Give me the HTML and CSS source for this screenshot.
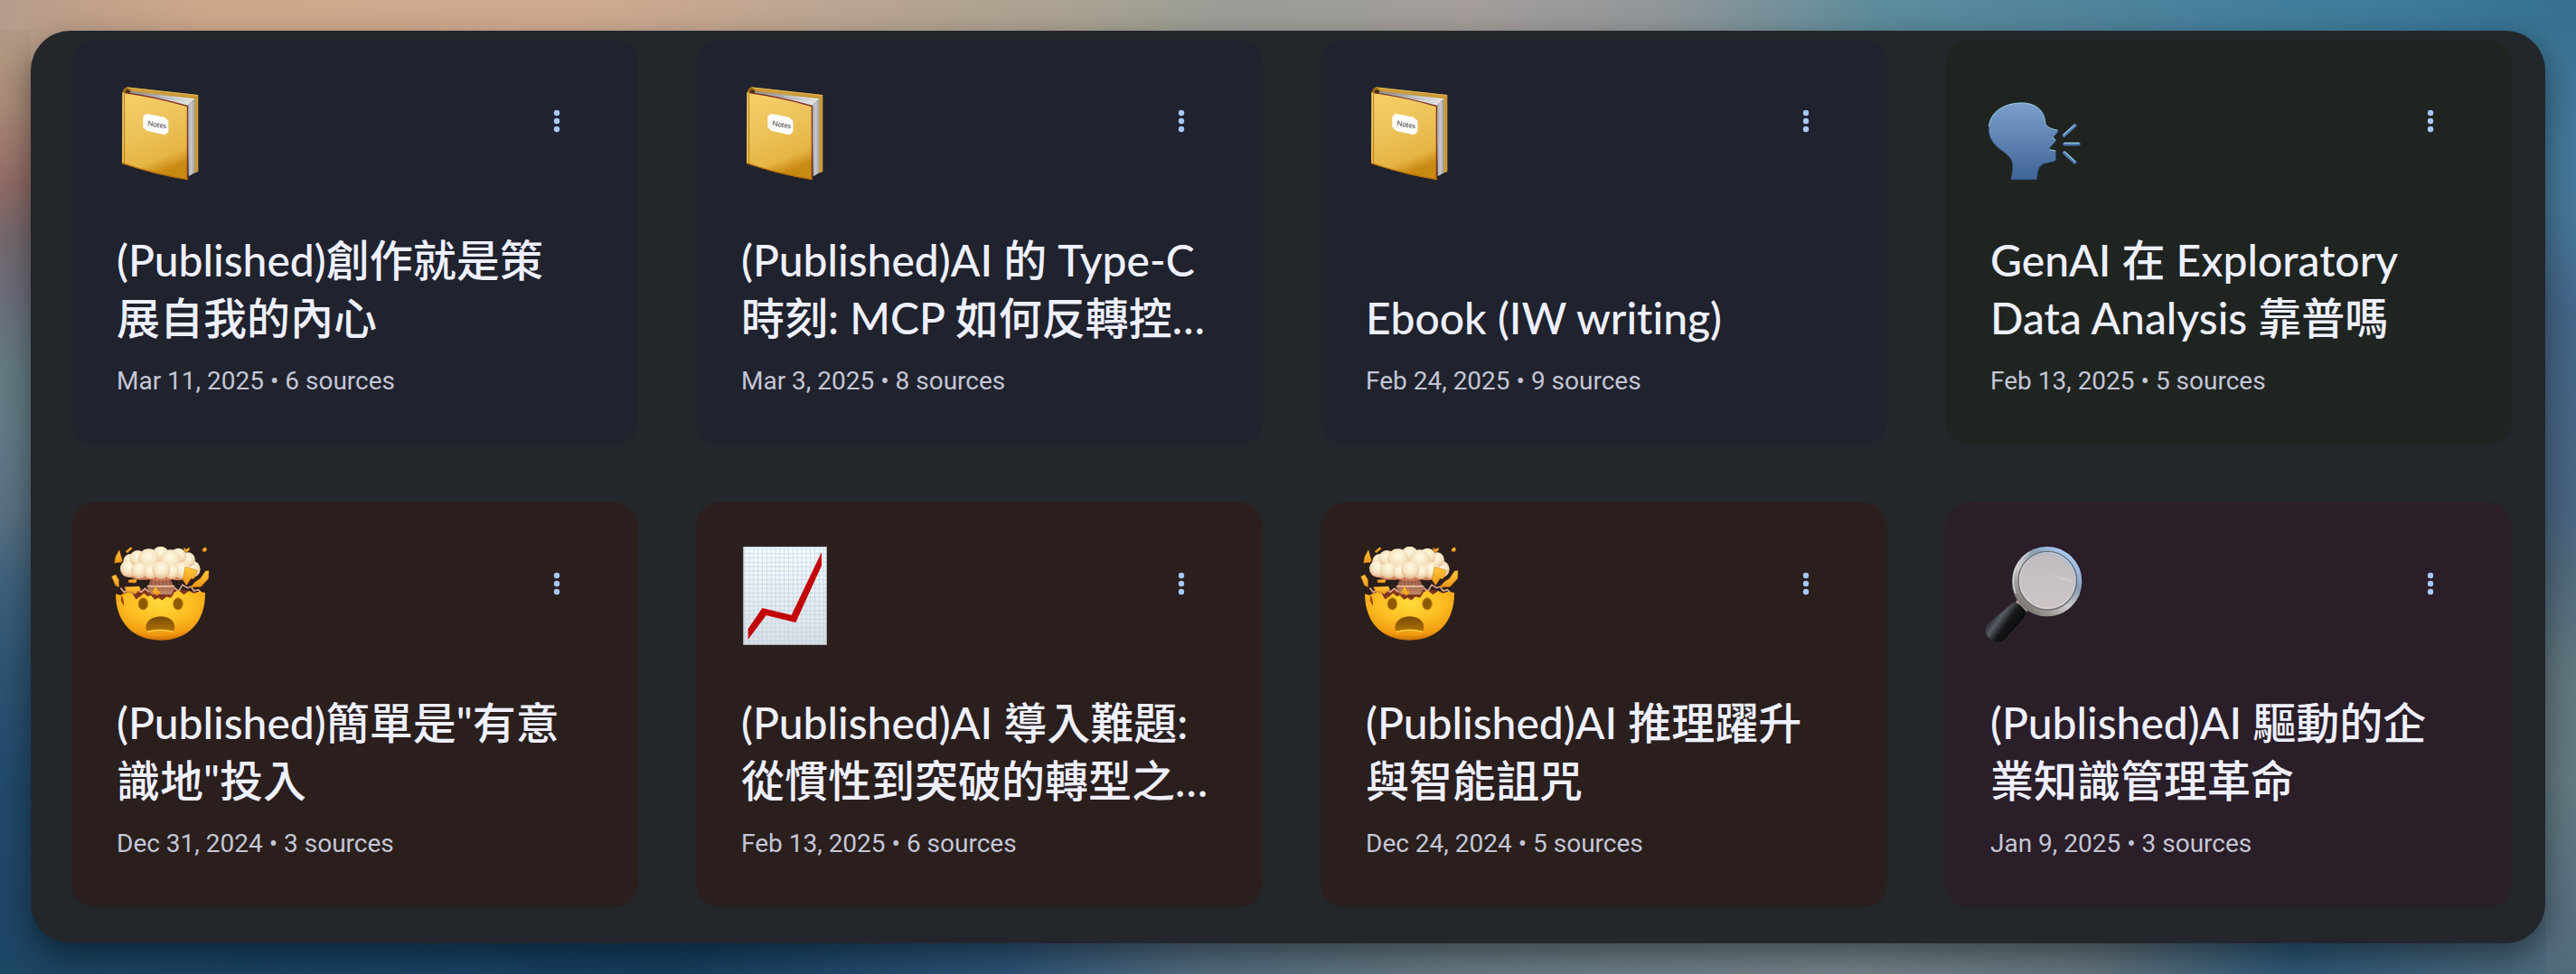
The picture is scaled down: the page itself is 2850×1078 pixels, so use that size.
FILE: index.html
```html
<!DOCTYPE html>
<html lang="zh-Hant">
<head>
<meta charset="utf-8">
<meta name="viewport" content="width=device-width, initial-scale=1">
<title>Notebooks</title>
<link rel="stylesheet" href="styles.css">
</head>
<body>
<svg class="sprite" aria-hidden="true">
  <defs>
    <linearGradient id="cover" x1="0" y1="0" x2="0.3" y2="1"><stop offset="0" stop-color="#f8d068"/><stop offset=".45" stop-color="#edc45c"/><stop offset=".85" stop-color="#e6b544"/><stop offset="1" stop-color="#c98a12"/></linearGradient>
    <linearGradient id="pages" x1="0" y1="0" x2="1" y2="0"><stop offset="0" stop-color="#8f8f93"/><stop offset=".5" stop-color="#c6c6ca"/><stop offset="1" stop-color="#9a9a9d"/></linearGradient>
    <linearGradient id="pages-top" x1="0" y1="0" x2="1" y2="0"><stop offset="0" stop-color="#8a8a8c"/><stop offset=".6" stop-color="#b9b9bb"/><stop offset="1" stop-color="#e4e4e4"/></linearGradient>
    <linearGradient id="head" x1="0" y1="0" x2="0" y2="1"><stop offset="0" stop-color="#7ba0cb"/><stop offset="1" stop-color="#3f6597"/></linearGradient>
    <radialGradient id="face" cx=".5" cy=".25" r=".75"><stop offset="0" stop-color="#ffdb3b"/><stop offset=".5" stop-color="#fdbd22"/><stop offset=".85" stop-color="#f09a10"/><stop offset="1" stop-color="#c96d05"/></radialGradient>
    <radialGradient id="puff" cx=".5" cy=".35" r=".65"><stop offset="0" stop-color="#fffbe6"/><stop offset=".6" stop-color="#f6e3bf"/><stop offset="1" stop-color="#e3b48b"/></radialGradient>
    <linearGradient id="shard" x1="0" y1="0" x2="0" y2="1"><stop offset="0" stop-color="#ffcb3d"/><stop offset="1" stop-color="#ef9416"/></linearGradient>
    <linearGradient id="stem" x1="0" y1="0" x2="0" y2="1"><stop offset="0" stop-color="#8a3f2c"/><stop offset="1" stop-color="#c08a6c"/></linearGradient>
    <linearGradient id="mouth" x1="0" y1="0" x2="0" y2="1"><stop offset="0" stop-color="#7a4b02"/><stop offset="1" stop-color="#ab7108"/></linearGradient>
    <linearGradient id="paper" x1="0" y1="0" x2="0" y2="1"><stop offset="0" stop-color="#fbfcfd"/><stop offset="1" stop-color="#dfe1e1"/></linearGradient>
    <linearGradient id="rim" x1=".9" y1=".1" x2=".2" y2=".95"><stop offset="0" stop-color="#a9ccf8"/><stop offset=".3" stop-color="#8b9cb4"/><stop offset=".6" stop-color="#cfcdcc"/><stop offset="1" stop-color="#7e7873"/></linearGradient>
    <linearGradient id="lens" x1="0" y1="0" x2="0" y2="1"><stop offset="0" stop-color="#bfbabf"/><stop offset="1" stop-color="#cfc7c5"/></linearGradient>
    <linearGradient id="grip" x1=".15" y1=".3" x2=".85" y2=".8"><stop offset="0" stop-color="#1c1e21"/><stop offset=".25" stop-color="#565c63"/><stop offset=".5" stop-color="#141618"/><stop offset=".85" stop-color="#08090a"/><stop offset="1" stop-color="#35353a"/></linearGradient>
    <pattern id="grid" x="56" y="52" width="14.5" height="14.5" patternUnits="userSpaceOnUse"><path d="M0 1.500H14.500M1.500 0V14.500" stroke="#a5cdee" stroke-width="2.200" opacity=".75"/></pattern>
  </defs>

  <symbol id="icon-notebook" viewBox="39 39 330 330">
    <path d="M90 49 328 75V330L312 336V92L96 64Z" fill="#c99b3a"/>
    <path d="M92 51 327 77" stroke="#e0b552" stroke-width="3"/>
    <path d="M97 62 316 88 292 112 94 70Z" fill="url(#pages-top)"/>
    <path d="M292 112 316 88V334L296 346Z" fill="url(#pages)"/>
    <path d="M298 108V342M304 102V340M310 96V336" stroke="#efeff2" stroke-width="1.500" opacity=".4"/>
    <path d="M200 80 314 90M230 92 306 98M180 84 300 106" stroke="#fff" stroke-width="2" opacity=".6"/>
    <path d="M92 49Q78 54 77 68L97 73 104 60Z" fill="#a06c13"/>
    <path d="M90 58 104 62 98 70 86 66Z" fill="#2f2a26"/>
    <path d="M76 67Q180 82 294 114V357Q180 338 75 302Z" fill="url(#cover)"/>
    <path d="M84 68Q185 82 292 112V352" fill="none" stroke="#83281b" stroke-width="3.500"/>
    <path d="M83 70V302" stroke="#b57b1a" stroke-width="3"/>
    <path d="M76 302Q180 338 294 356" fill="none" stroke="#b26f0b" stroke-width="4"/>
    <path d="M156 137 216 149 229 162V198L217 208 157 194 145 182V147Z" fill="#fff"/>
    <text class="book-label" x="159" y="177" transform="rotate(9 159 177)">Notes</text>
  </symbol>

  <symbol id="icon-speaking" viewBox="48 9 330 330">
    <path d="M134 326Q143 292 139 270C134 244 101 231 84 213C67 195 61 178 61 157C61 105 108 71 170 71C218 71 245 97 248 136C250 153 270 158 290 163C292 174 275 180 276 188L283 196C284 203 264 214 262 226L283 231C284 240 281 249 285 259C279 272 248 266 234 280C222 291 223 308 220 326Z" fill="url(#head)" stroke="#2c4e7c" stroke-width="2"/>
    <path d="M62 150C65 104 110 72 170 72C218 72 245 97 248 136C250 153 270 158 290 163M262 227 283 231M274 186 283 196" fill="none" stroke="#9bd0e0" stroke-width="3"/>
    <g stroke-linecap="round" fill="none"><path d="M311 180 347 147M312 208H360M311 237 346 269" stroke="#4e79b0" stroke-width="11"/><path d="M309 177 345 145M312 205H360M313 234 348 266" stroke="#8fc3d8" stroke-width="4"/></g>
  </symbol>

  <symbol id="icon-exploding" viewBox="39 45 330 330">
    <path d="M72 200 84 196 110 198 128 188 164 186H245L280 188 338 200 330 216H80Z" fill="#7b3323"/>
    <path d="M70 182 82 196 96 188 108 198 122 182 138 196 152 184 164 196M236 194 250 182 262 194 276 172 292 182 304 178 314 192 328 188 338 198" fill="none" stroke="#e0aa8c" stroke-width="5"/>
    <path d="M168 140H238Q234 160 250 180L240 204H170L158 180Q172 160 168 140Z" fill="url(#stem)"/>
    <path d="M180 154V176M192 156V178M204 156V178M216 156V178M228 154V176" stroke="#e6b49a" stroke-width="2" opacity=".6"/>
    <path d="M156 177Q165 170 178 175 191 171 204 175 218 171 229 175 244 170 252 177Q240 181 204 180 168 181 156 177Z" fill="#e2bd9b"/>
    <path d="M54 202 70 206 84 200 96 194 110 202 122 220 136 207 148 196 160 207 172 204 184 218 196 212 208 220 222 208 236 212 246 198 262 190 280 204 298 192 312 200 330 194 351 198C352 292 298 356 203 356C108 356 54 292 54 202Z" fill="url(#face)"/>
    <path d="M120 218 136 207 148 196 160 207 172 204 184 218 196 212 208 220 222 208 236 212 246 198" fill="none" stroke="#8d3b16" stroke-width="5"/>
    <path d="M72 206Q83 216 81 242L71 224Z" fill="#a34c0b"/>
    <path d="M84 130H320Q312 150 284 152 266 160 240 154 204 164 168 154 140 158 116 152 94 148 84 130Z" fill="#cf7f58"/>
    <g fill="url(#puff)">
      <circle cx="104" cy="94" r="25"/><circle cx="98" cy="118" r="29"/><circle cx="306" cy="120" r="29"/><circle cx="293" cy="89" r="25"/><circle cx="127" cy="84" r="27"/><circle cx="262" cy="77" r="27"/><circle cx="203" cy="71" r="27"/><circle cx="164" cy="87" r="35"/><circle cx="236" cy="90" r="35"/><circle cx="132" cy="124" r="27"/><circle cx="275" cy="124" r="28"/><circle cx="170" cy="128" r="24"/><circle cx="240" cy="128" r="25"/><circle cx="205" cy="122" r="30"/>
    </g>
    <g fill="url(#shard)" stroke="#cf7410" stroke-width="1.500">
      <path d="M66 56 72 78 76 90 72 97 50 99 54 78Z"/><path d="M87 61 104 47 109 51 92 66Z"/><path d="M281 48 287 54 299 49 298 57 290 64 282 60Z"/><path d="M343 52 352 47 357 55 351 62 342 60Z"/><path d="M41 144 54 138 64 155 65 179 53 174Z"/><path d="M285 112 325 124 313 152 304 151 289 173 277 155Z"/><path d="M352 126 363 125 362 151 337 178 302 180 318 162 335 151Z"/><path d="M83 179 110 178 132 177 137 187 118 203 108 196 91 195Z"/><path d="M187 176 195 192 206 194 192 208 174 196Z"/><path d="M96 156 124 154 121 165 97 164Z"/>
    </g>
    <g fill="#8d5a04" stroke="#d08c0b" stroke-width="3"><ellipse cx="145" cy="235" rx="16" ry="20"/><ellipse cx="261" cy="235" rx="16" ry="20"/></g>
    <path d="M155 320C150 292 176 277 203 277S255 292 249 320C246 330 228 321 202 321S158 330 155 320Z" fill="url(#mouth)"/>
    <path d="M160 328Q203 315 244 328" fill="none" stroke="#ffd545" stroke-width="4"/>
  </symbol>

  <symbol id="icon-chart" viewBox="27 45 330 330">
    <path d="M52 45H329V371H52Z" fill="url(#paper)"/>
    <path d="M52 45H329V371H52Z" fill="url(#grid)"/>
    <path d="M53 46H328V370H53Z" fill="none" stroke="#a5a9ab" stroke-width="2"/>
    <path d="M68 318 115 249 212 272 312 63V108L226 297 128 273 68 353Z" fill="#c20508"/>
  </symbol>

  <symbol id="icon-magnifier" viewBox="48 45 330 330">
    <path d="M158 218 192 246 184 270 146 236Z" fill="#b3a19c"/>
    <path d="M176 226 200 254" stroke="#eee2df" stroke-width="8"/>
    <path d="M138 234Q146 226 164 238L180 254Q190 262 184 276L112 358Q100 370 80 362 56 350 50 326 50 312 58 302Z" fill="url(#grip)" stroke="#45464c" stroke-width="1.500"/>
    <circle cx="254" cy="161" r="104" fill="url(#lens)" stroke="url(#rim)" stroke-width="24"/>
    <circle cx="256" cy="158" r="97" fill="none" stroke="#6d6f74" stroke-width="4"/>
    <circle cx="256" cy="157" r="92" fill="none" stroke="#d8d7da" stroke-width="3"/>
    <path d="M150 200A114 114 0 0 1 196 63" fill="none" stroke="#d5d8da" stroke-width="4"/>
    <path d="M272 138 336 154V164L302 158Z" fill="#d7cfcf" opacity=".7"/>
  </symbol>

  <symbol id="icon-more" viewBox="0 0 32 32">
    <circle cx="16" cy="7" r="3.200"/><circle cx="16" cy="16" r="3.200"/><circle cx="16" cy="25" r="3.200"/>
  </symbol>
</svg>

<main class="panel">
  <article class="card card-blue">
    <header class="card-head"><svg class="emoji" aria-hidden="true"><use href="#icon-notebook"/></svg><button class="more" type="button" aria-label="More options"><svg class="more-icon"><use href="#icon-more"/></svg></button></header>
    <h2 class="title">(Published)創作就是策<br>展自我的內心</h2>
    <p class="meta">Mar 11, 2025 • 6 sources</p>
  </article>
  <article class="card card-blue">
    <header class="card-head"><svg class="emoji" aria-hidden="true"><use href="#icon-notebook"/></svg><button class="more" type="button" aria-label="More options"><svg class="more-icon"><use href="#icon-more"/></svg></button></header>
    <h2 class="title">(Published)AI 的 Type-C 時刻: MCP 如何反轉控…</h2>
    <p class="meta">Mar 3, 2025 • 8 sources</p>
  </article>
  <article class="card card-blue">
    <header class="card-head"><svg class="emoji" aria-hidden="true"><use href="#icon-notebook"/></svg><button class="more" type="button" aria-label="More options"><svg class="more-icon"><use href="#icon-more"/></svg></button></header>
    <h2 class="title">Ebook (IW writing)</h2>
    <p class="meta">Feb 24, 2025 • 9 sources</p>
  </article>
  <article class="card card-green">
    <header class="card-head"><svg class="emoji" aria-hidden="true"><use href="#icon-speaking"/></svg><button class="more" type="button" aria-label="More options"><svg class="more-icon"><use href="#icon-more"/></svg></button></header>
    <h2 class="title">GenAI 在 Exploratory Data Analysis 靠普嗎</h2>
    <p class="meta">Feb 13, 2025 • 5 sources</p>
  </article>
  <article class="card card-brown">
    <header class="card-head"><svg class="emoji" aria-hidden="true"><use href="#icon-exploding"/></svg><button class="more" type="button" aria-label="More options"><svg class="more-icon"><use href="#icon-more"/></svg></button></header>
    <h2 class="title">(Published)簡單是"有意識地"投入</h2>
    <p class="meta">Dec 31, 2024 • 3 sources</p>
  </article>
  <article class="card card-brown">
    <header class="card-head"><svg class="emoji" aria-hidden="true"><use href="#icon-chart"/></svg><button class="more" type="button" aria-label="More options"><svg class="more-icon"><use href="#icon-more"/></svg></button></header>
    <h2 class="title">(Published)AI 導入難題: 從慣性到突破的轉型之…</h2>
    <p class="meta">Feb 13, 2025 • 6 sources</p>
  </article>
  <article class="card card-brown">
    <header class="card-head"><svg class="emoji" aria-hidden="true"><use href="#icon-exploding"/></svg><button class="more" type="button" aria-label="More options"><svg class="more-icon"><use href="#icon-more"/></svg></button></header>
    <h2 class="title">(Published)AI 推理躍升與智能詛咒</h2>
    <p class="meta">Dec 24, 2024 • 5 sources</p>
  </article>
  <article class="card card-purple">
    <header class="card-head"><svg class="emoji" aria-hidden="true"><use href="#icon-magnifier"/></svg><button class="more" type="button" aria-label="More options"><svg class="more-icon"><use href="#icon-more"/></svg></button></header>
    <h2 class="title">(Published)AI 驅動的企業知識管理革命</h2>
    <p class="meta">Jan 9, 2025 • 3 sources</p>
  </article>
</main>
</body>
</html>
```

FILE: styles.css
```css
* { box-sizing: border-box; }

body {
  --sky: linear-gradient(90deg, #b49c8b 0%, #b89d8a 1%, #cfa88b 8%, #d0aa90 22%, #bca592 32%, #a9a292 42%, #9a9d98 48%, #a59e9b 57%, #8f969a 65%, #5d8c9c 73%, #457f9c 87%, #3b7898 95%, #38708f 100%);
  margin: 0;
  min-height: 100vh;
  padding: 34px;
  display: flex;
  font-family: Lato, "Noto Sans CJK TC", sans-serif;
  /* soft wallpaper: one gradient per edge of the window */
  background:
    var(--sky) top / 100% 34px no-repeat,
    linear-gradient(#b49c8b 0%, #b0957f 6%, #a98a77 11%, #906c66 19%, #75686d 24%, #6b6f7c 31%, #647b83 38%, #627b86 44%, #5b7283 52%, #3f617b 60%, #2c5473 69%, #214a6c 80%, #1d4564 100%) left / 34px 100% no-repeat,
    linear-gradient(#38708f 0%, #43799a 14%, #467899 22%, #456689 32%, #4a6583 52%, #4f6a7d 58%, #62777f 69%, #647a82 80%, #5a7180 92%, #526c7e 100%) right / 34px 100% no-repeat,
    linear-gradient(90deg, #1d4564 0%, #194466 15%, #163f60 26%, #2d5478 39%, #516c80 46%, #6a7d85 57%, #74858b 72%, #66777f 81%, #2e5878 89%, #526c7e 100%) bottom / 100% 50% no-repeat,
    var(--sky);
}

.sprite { position: absolute; width: 0; height: 0; }

.panel {
  flex: 1;
  min-width: 0;
  display: grid;
  grid-template-columns: repeat(4, minmax(0, 1fr));
  grid-auto-rows: 448px;
  gap: 64px;
  padding: 10px 37px 40px 45px;
  border-radius: 44px;
  background: #23272b;
  box-shadow: 0 14px 36px rgba(0, 0, 0, 0.45);
}

.card {
  display: flex;
  flex-direction: column;
  padding: 49px 50px 50px;
  border-radius: 26px;
}

.card-blue { background: #20222d; }
.card-green { background: #1f2421; }
.card-brown { background: #2a1f1d; }
.card-purple { background: #2a1e28; }

.card-head {
  display: flex;
  justify-content: space-between;
  align-items: flex-start;
  margin-left: -6px;
}

.emoji { width: 110px; height: 110px; }

.book-label { font: 24px Lato, sans-serif; fill: #333; }

.more {
  display: grid;
  place-items: center;
  width: 80px;
  height: 82px;
  padding: 0;
  border: 0;
  border-radius: 50%;
  background: none;
  cursor: pointer;
}

.more-icon { width: 32px; height: 32px; fill: #a8c7fa; }

.title {
  margin: auto 0 0;
  font-size: 48px;
  font-weight: 500;
  font-variant-ligatures: none;
  line-height: 64px;
  color: #eef0ff;
}

.meta {
  margin: 18px 0 0;
  font-family: Roboto, sans-serif;
  font-size: 28px;
  line-height: 40px;
  color: #c4c6d6;
}
```
